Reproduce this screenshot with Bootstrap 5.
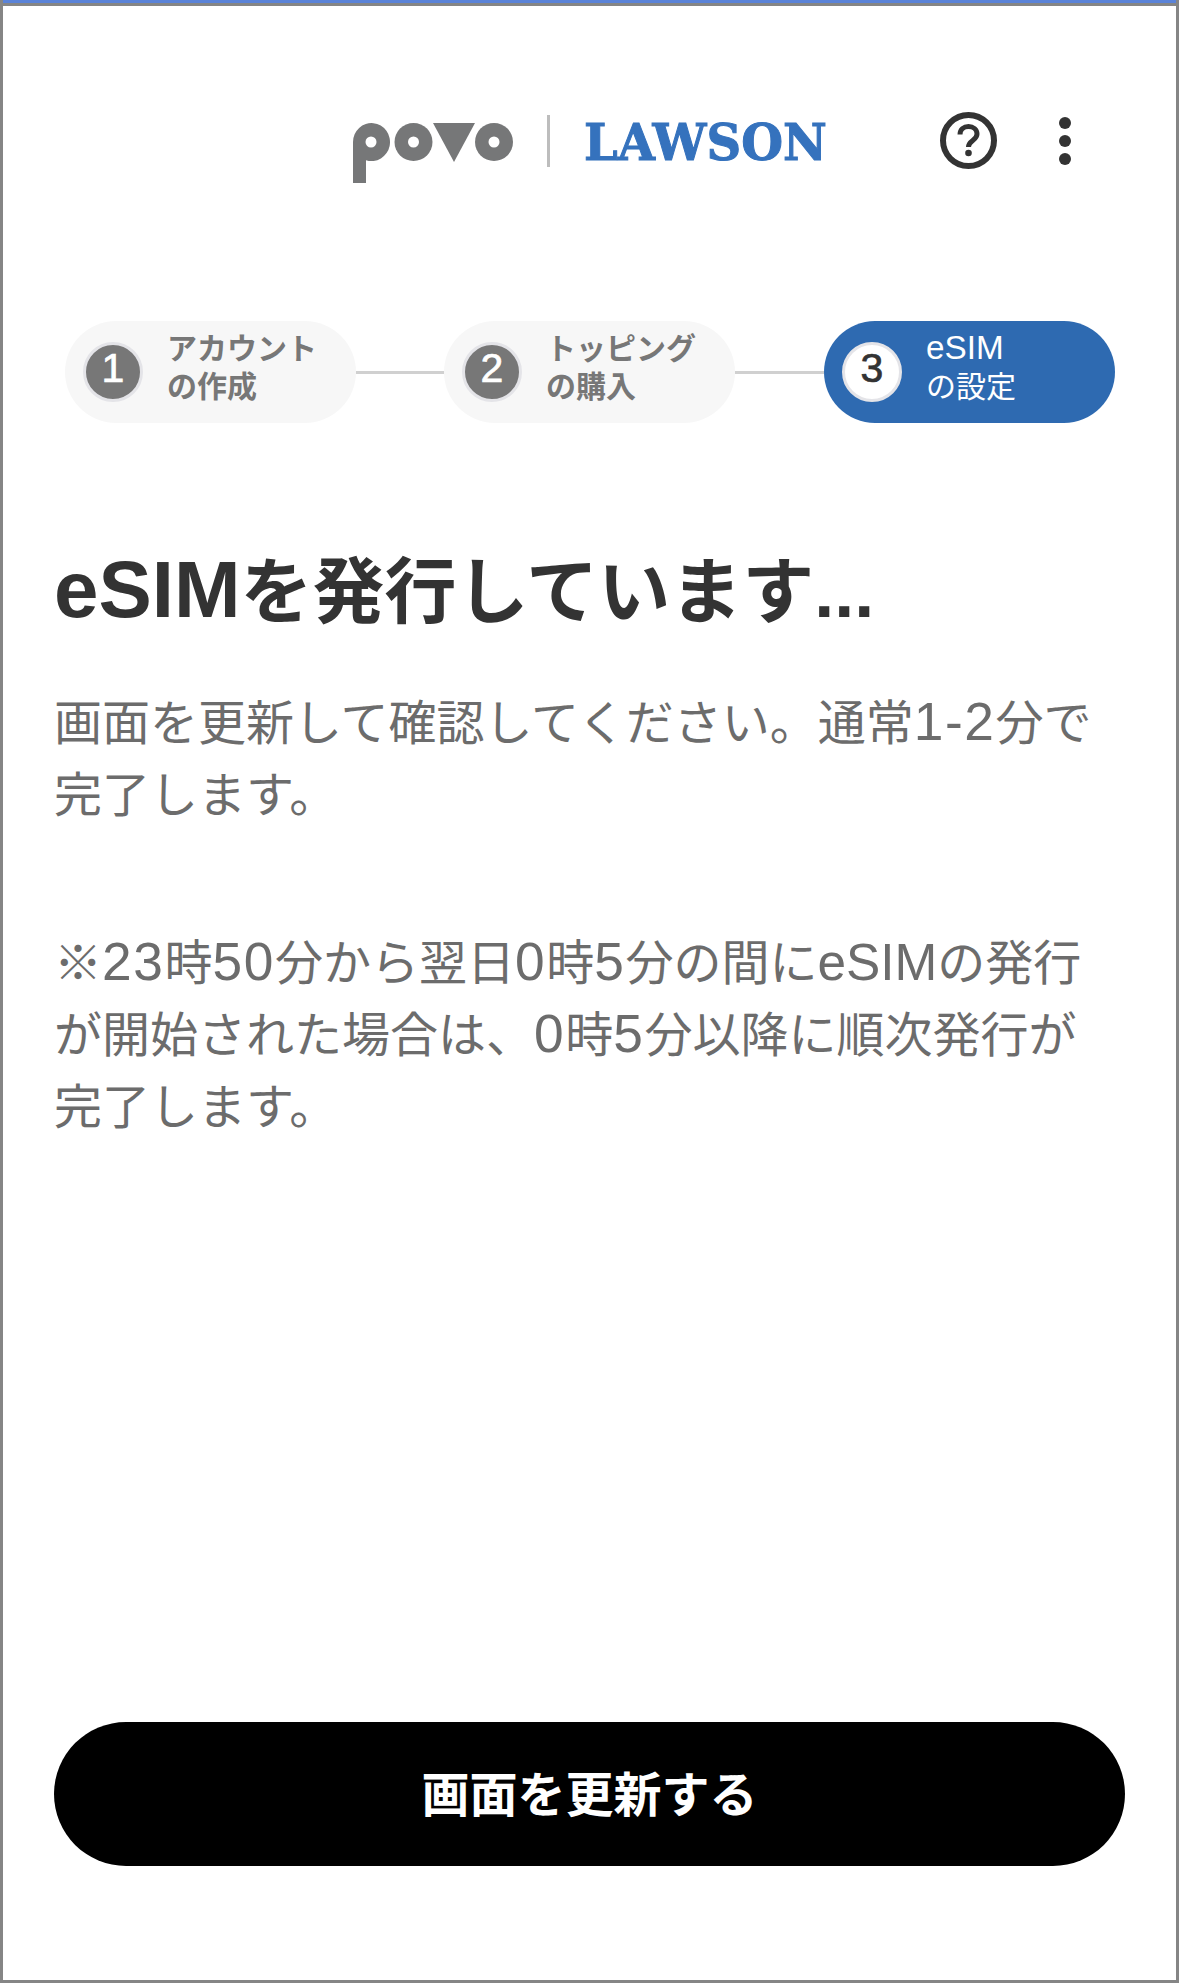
<!doctype html>
<html lang="ja"><head><meta charset="utf-8"><title>eSIM</title>
<link href="https://cdn.jsdelivr.net/npm/bootstrap@5.3.0/dist/css/bootstrap.min.css" rel="stylesheet">
<style>
body{font-family:"Noto Sans CJK JP","Noto Sans",sans-serif;background:#fff;margin:0}
.frame{height:1983px;border:3px solid #858585;border-top:0;position:relative;overflow:hidden}
.topline{height:3px;background:#5a83d8;margin:0 -3px}
.topline2{height:3px;background:#858585;margin:0 -3px}
.brandbar{padding:106px 0 0 350px;height:315px}
.povo{margin-top:11px;flex:none}
.divider{width:3px;height:52px;margin:3px 34px 0 34px;background:#bdbdbd;flex:none}
.lawson{font:700 48px/37px "DejaVu Serif",serif;color:#3572bd;margin-top:12px;width:241px;flex:none;white-space:nowrap;transform:scaleY(1.06);-webkit-text-stroke:1px #3572bd}
.help{margin-left:115px;flex:none}
.dots{margin-left:62px;flex:none}
.stepper{margin:0 0 0 62px}
.pill{width:291px;height:102px;background:#f7f7f7;padding-left:18px;color:#777;gap:24px;flex:none}
.pill.active{background:#2e6ab1;color:#fff}
.num{width:60px;height:60px;background:#777;color:#fff;border:3px solid #e4e4e8;font:400 41px/1 "Liberation Sans",sans-serif;-webkit-text-stroke:.7px currentColor;flex:none;padding-bottom:7px}
.active .num{background:#fff;color:#333}
.lbl{font-size:30px;line-height:38px;font-weight:700;padding-bottom:15px}
.active .lbl{font-weight:400}
.link{height:3px;background:#d0d0d0;flex:none}
.link-a{width:88px}
.link-b{width:89px}
.content{padding:0 51px}
.title{font-size:72px;line-height:90px;font-weight:700;color:#333;margin:118px 0 52px}
.para{font-size:48px;line-height:72px;color:#6c6c6c;margin:0 0 96px;font-weight:400}
.lat{font-family:"Liberation Sans",sans-serif;font-size:1.11em;line-height:1}
.para .lat{letter-spacing:.03em}
.para .lat-word{font-family:"Liberation Sans",sans-serif;font-size:1.07em;line-height:1}
.dots-txt{font-family:"Liberation Sans",sans-serif;line-height:1}
.cta{height:144px;background:#000;color:#fff;font-size:48px;font-weight:700;position:absolute;left:51px;right:51px;bottom:114px;border:0;padding-bottom:13px}
.cta:hover,.cta:active{background:#000;color:#fff}
</style></head><body>
<div class="frame">
<div class="topline"></div><div class="topline2"></div>
<header class="brandbar d-flex align-items-start">
<svg class="povo" width="160" height="60" viewBox="0 0 160 60" role="img" aria-label="povo"><g fill="#767778"><path d="M0 19a18.500 19 0 1 1 13 18.200V60H0z"/><circle cx="18" cy="19" r="5.500" fill="#fff"/><circle cx="60.500" cy="19" r="19" /><circle cx="60.500" cy="19" r="5.500" fill="#fff"/><path d="M80 0h42l-21 39z"/><circle cx="141" cy="19" r="19"/><circle cx="141" cy="19" r="5.500" fill="#fff"/></g></svg>
<div class="divider"></div>
<div class="lawson">LAWSON</div>
<svg class="help" width="57" height="57" viewBox="0 0 57 57" role="img" aria-label="ヘルプ"><circle cx="28.500" cy="28.500" r="25.500" fill="none" stroke="#333" stroke-width="6"/><path d="M20 22.500c0-5 3.800-8 8.500-8s8.500 3 8.500 7.500c0 6.500-8.500 6.500-8.500 13" fill="none" stroke="#333" stroke-width="5"/><circle cx="28.500" cy="41" r="3.300" fill="#333"/></svg>
<svg class="dots" width="12" height="57" viewBox="0 0 12 57" role="img" aria-label="メニュー"><g fill="#333"><circle cx="6" cy="11" r="6"/><circle cx="6" cy="29" r="6"/><circle cx="6" cy="47" r="6"/></g></svg>
</header>
<div class="stepper d-flex align-items-center">
<div class="pill rounded-pill d-flex align-items-center"><div class="num rounded-circle d-flex align-items-center justify-content-center">1</div><div class="lbl">アカウント<br>の作成</div></div>
<div class="link link-a"></div>
<div class="pill rounded-pill d-flex align-items-center"><div class="num rounded-circle d-flex align-items-center justify-content-center">2</div><div class="lbl">トッピング<br>の購入</div></div>
<div class="link link-b"></div>
<div class="pill active rounded-pill d-flex align-items-center"><div class="num rounded-circle d-flex align-items-center justify-content-center">3</div><div class="lbl"><span class="lat">eSIM</span><br>の設定</div></div>
</div>
<main class="content">
<h1 class="title"><span class="lat">eSIM</span>を発行しています<span class="dots-txt">...</span></h1>
<p class="para">画面を更新して確認してください。通常<span class="lat">1-2</span>分で<br>完了します。</p>
<p class="para">※<span class="lat">23</span>時<span class="lat">50</span>分から翌日<span class="lat">0</span>時<span class="lat">5</span>分の間に<span class="lat-word">eSIM</span>の発行<br>が開始された場合は、<span class="lat">0</span>時<span class="lat">5</span>分以降に順次発行が<br>完了します。</p>
</main>
<button type="button" class="btn cta rounded-pill d-flex align-items-center justify-content-center">画面を更新する</button>
</div>
</body></html>
